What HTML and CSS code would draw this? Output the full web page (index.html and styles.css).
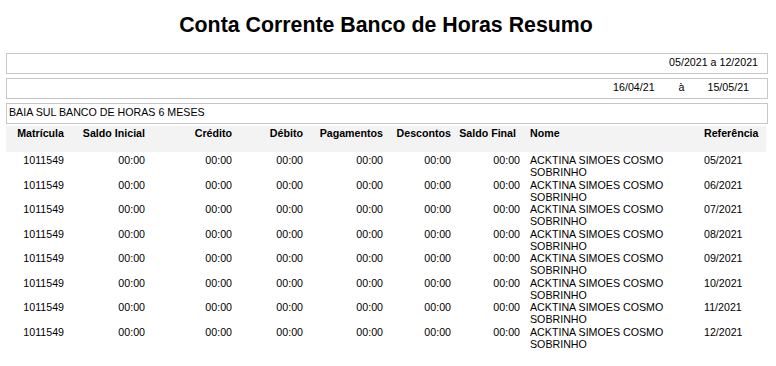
FILE: index.html
```html
<!DOCTYPE html>
<html lang="pt-BR">
<head>
<meta charset="utf-8">
<title>Conta Corrente Banco de Horas Resumo</title>
<link rel="stylesheet" href="styles.css">
</head>
<body>
<h1 class="title">Conta Corrente Banco de Horas Resumo</h1>
<div class="box box-right">05/2021 a 12/2021</div>
<div class="box box-period">
  <span>16/04/21</span>
  <span class="sep">à</span>
  <span class="end">15/05/21</span>
</div>
<div class="box box-left">BAIA SUL BANCO DE HORAS 6 MESES</div>
<div class="table">
  <div class="row head">
    <div class="c r">Matrícula</div>
    <div class="c r">Saldo Inicial</div>
    <div class="c r">Crédito</div>
    <div class="c r">Débito</div>
    <div class="c r">Pagamentos</div>
    <div class="c r">Descontos</div>
    <div class="c r sf-head">Saldo Final</div>
    <div class="c name">Nome</div>
    <div class="c ref">Referência</div>
  </div>
  <div class="row"><div class="c r">1011549</div><div class="c r">00:00</div><div class="c r">00:00</div><div class="c r">00:00</div><div class="c r">00:00</div><div class="c r">00:00</div><div class="c r">00:00</div><div class="c name">ACKTINA SIMOES COSMO SOBRINHO</div><div class="c ref">05/2021</div></div>
  <div class="row"><div class="c r">1011549</div><div class="c r">00:00</div><div class="c r">00:00</div><div class="c r">00:00</div><div class="c r">00:00</div><div class="c r">00:00</div><div class="c r">00:00</div><div class="c name">ACKTINA SIMOES COSMO SOBRINHO</div><div class="c ref">06/2021</div></div>
  <div class="row"><div class="c r">1011549</div><div class="c r">00:00</div><div class="c r">00:00</div><div class="c r">00:00</div><div class="c r">00:00</div><div class="c r">00:00</div><div class="c r">00:00</div><div class="c name">ACKTINA SIMOES COSMO SOBRINHO</div><div class="c ref">07/2021</div></div>
  <div class="row"><div class="c r">1011549</div><div class="c r">00:00</div><div class="c r">00:00</div><div class="c r">00:00</div><div class="c r">00:00</div><div class="c r">00:00</div><div class="c r">00:00</div><div class="c name">ACKTINA SIMOES COSMO SOBRINHO</div><div class="c ref">08/2021</div></div>
  <div class="row"><div class="c r">1011549</div><div class="c r">00:00</div><div class="c r">00:00</div><div class="c r">00:00</div><div class="c r">00:00</div><div class="c r">00:00</div><div class="c r">00:00</div><div class="c name">ACKTINA SIMOES COSMO SOBRINHO</div><div class="c ref">09/2021</div></div>
  <div class="row"><div class="c r">1011549</div><div class="c r">00:00</div><div class="c r">00:00</div><div class="c r">00:00</div><div class="c r">00:00</div><div class="c r">00:00</div><div class="c r">00:00</div><div class="c name">ACKTINA SIMOES COSMO SOBRINHO</div><div class="c ref">10/2021</div></div>
  <div class="row"><div class="c r">1011549</div><div class="c r">00:00</div><div class="c r">00:00</div><div class="c r">00:00</div><div class="c r">00:00</div><div class="c r">00:00</div><div class="c r">00:00</div><div class="c name">ACKTINA SIMOES COSMO SOBRINHO</div><div class="c ref">11/2021</div></div>
  <div class="row"><div class="c r">1011549</div><div class="c r">00:00</div><div class="c r">00:00</div><div class="c r">00:00</div><div class="c r">00:00</div><div class="c r">00:00</div><div class="c r">00:00</div><div class="c name">ACKTINA SIMOES COSMO SOBRINHO</div><div class="c ref">12/2021</div></div>
</div>
</body>
</html>
```
FILE: styles.css
```css
html, body {
  margin: 0;
  padding: 0;
  background: #fff;
}
body {
  padding: 0 8px 0 6px;
  font-family: "Liberation Sans", Arial, sans-serif;
  font-size: 10.667px;
  line-height: 12.25px;
  color: #000;
}
.title {
  margin: 13px 0 16px;
  font-size: 21.333px;
  line-height: 24px;
  font-weight: bold;
  text-align: center;
  padding-right: 2px;
}
.box {
  box-sizing: border-box;
  width: 762px;
  height: 21px;
  border: 1px solid #c6c6c6;
  padding-top: 2px;
  margin-bottom: 4px;
}
.box-right {
  text-align: right;
  padding-right: 9px;
}
.box-period {
  display: flex;
  justify-content: flex-end;
  padding-right: 18px;
}
.box-period .sep { margin-left: 24px; }
.box-period .end { margin-left: 23px; }
.box-left {
  padding-left: 2px;
  margin-bottom: 2px;
}
.table {
  width: 760px;
}
.row {
  display: grid;
  grid-template-columns: 62px 81px 87px 71px 80px 68px 69px 176px 66px;
  height: 24.5px;
}
.row.head {
  background: #f3f3f3;
  box-sizing: border-box;
  height: 26px;
  padding-top: 1px;
  font-weight: bold;
  margin-bottom: 2px;
}
.c {
  padding-right: 4px;
}
.r {
  text-align: right;
}
.sf-head {
  padding-right: 8px;
}
.name {
  padding: 0 0 0 6px;
}
.ref {
  padding: 0 0 0 4px;
}
```
